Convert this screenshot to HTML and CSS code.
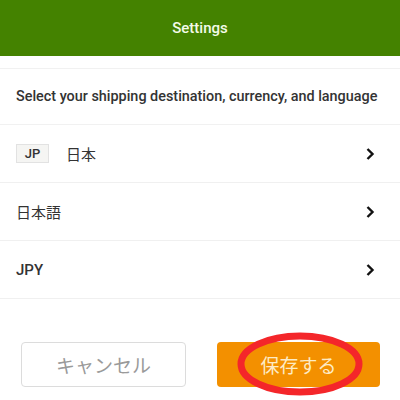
FILE: index.html
```html
<!DOCTYPE html>
<html lang="ja">
<head>
  <meta charset="UTF-8" />
  <meta name="viewport" content="width=device-width, initial-scale=1.0"/>
  <title>Settings</title>
  <link rel="stylesheet" href="styles.css">
</head>
<body>
  <header class="topbar">Settings</header>

  <div class="intro">Select your shipping destination, currency, and language</div>

  <ul class="options">
    <li class="option">
      <span class="badge">JP</span>
      <span class="label">日本</span>
      <svg class="chevron" width="10" height="14" viewBox="0 0 10 14"><path d="M2.5 2 L7.5 7 L2.5 12" fill="none" stroke="#111" stroke-width="2.4"/></svg>
    </li>
    <li class="option">
      <span class="label">日本語</span>
      <svg class="chevron" width="10" height="14" viewBox="0 0 10 14"><path d="M2.5 2 L7.5 7 L2.5 12" fill="none" stroke="#111" stroke-width="2.4"/></svg>
    </li>
    <li class="option">
      <span class="label latin">JPY</span>
      <svg class="chevron" width="10" height="14" viewBox="0 0 10 14"><path d="M2.5 2 L7.5 7 L2.5 12" fill="none" stroke="#111" stroke-width="2.4"/></svg>
    </li>
  </ul>

  <div class="actions">
    <button class="btn btn-cancel">キャンセル</button>
    <button class="btn btn-save">
      保存する
      <!-- 赤丸の強調 -->
      <svg class="circle-mark" width="130" height="66" viewBox="0 0 130 66"><ellipse cx="65" cy="33" rx="59" ry="28" fill="none" stroke="#f4262a" stroke-width="7"/></svg>
    </button>
  </div>
</body>
</html>
```

FILE: styles.css
```css
body {
  margin: 0;
  font-family: Roboto, "Noto Sans CJK JP", sans-serif;
  background-color: #fff;
  color: #333;
  width: 400px;
  height: 400px;
  overflow: hidden;
}

.topbar {
  height: 56px;
  background-color: #448200;
  color: #f4fbe8;
  font-size: 15px;
  font-weight: 500;
  display: flex;
  align-items: center;
  justify-content: center;
}

.intro {
  margin-top: 12px;
  border-top: 1px solid #f1f1f1;
  border-bottom: 1px solid #f1f1f1;
  height: 55px;
  padding: 0 16px;
  display: flex;
  align-items: center;
  font-size: 14.4px;
  font-weight: 500;
  color: #333;
  white-space: nowrap;
}

.options {
  list-style: none;
  margin: 0;
  padding: 0;
}

.option {
  height: 57px;
  border-bottom: 1px solid #f0f0f0;
  display: flex;
  align-items: center;
  padding: 0 25px 0 16px;
  font-size: 15px;
  color: #333;
}

.badge {
  font-size: 13px;
  font-weight: 500;
  background-color: #f5f5f3;
  border: 1px solid #e2e2e2;
  width: 31px;
  height: 17px;
  display: flex;
  align-items: center;
  justify-content: center;
  margin-right: 17px;
}

.label {
  flex: 1;
}

.latin {
  font-weight: 500;
}

.chevron {
  display: block;
}

.actions {
  display: flex;
  gap: 31px;
  padding: 43px 20px 0 21px;
}

.btn {
  flex: 1;
  height: 45px;
  border-radius: 4px;
  font-family: "Noto Sans CJK JP", sans-serif;
  font-size: 19px;
  display: flex;
  align-items: center;
  justify-content: center;
  position: relative;
  padding: 0;
}

.btn-cancel {
  background: #fff;
  border: 1px solid #dcdcdc;
  color: #9a9a9a;
}

.btn-save {
  background: #f39000;
  border: none;
  color: #fdebc4;
}

.circle-mark {
  position: absolute;
  left: 18px;
  top: -11px;
}
```
